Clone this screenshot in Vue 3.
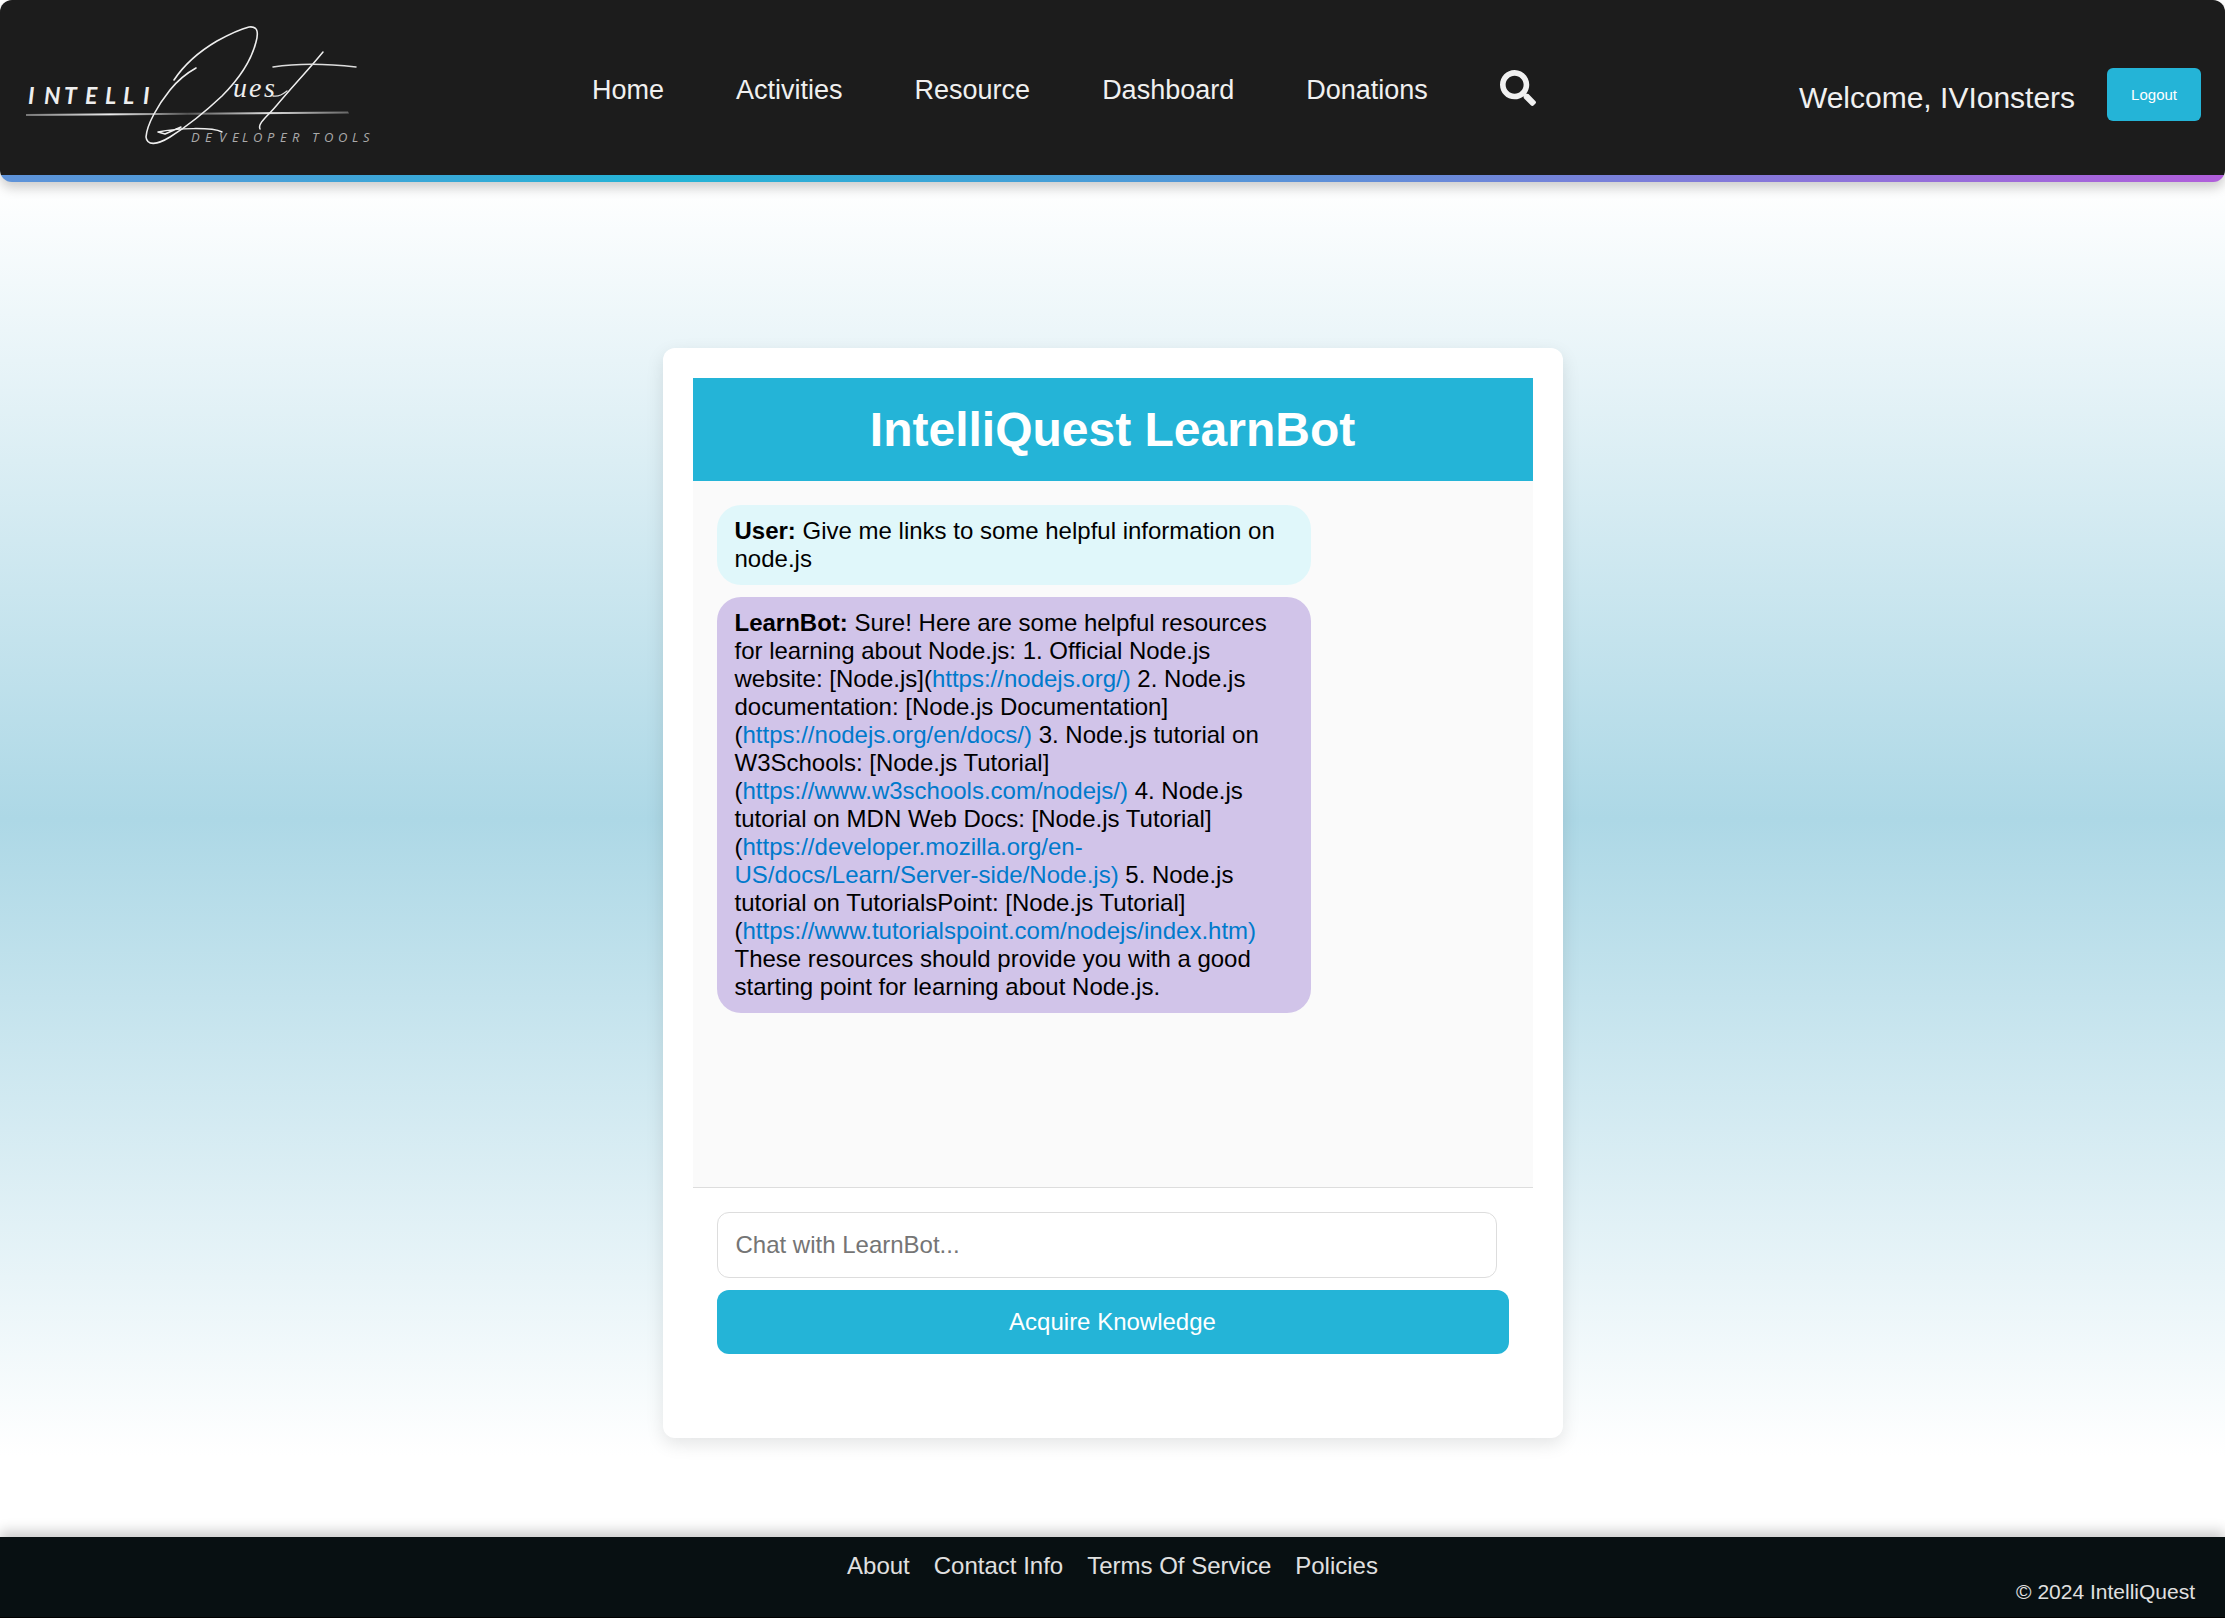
<script setup>
import { ref } from 'vue'

const navLinks = ['Home', 'Activities', 'Resource', 'Dashboard', 'Donations']
const footerLinks = ['About', 'Contact Info', 'Terms Of Service', 'Policies']

const draft = ref('')

const messages = [
  {
    from: 'user',
    author: 'User:',
    text: 'Give me links to some helpful information on node.js',
  },
  {
    from: 'bot',
    author: 'LearnBot:',
    text:
      'Sure! Here are some helpful resources for learning about Node.js: ' +
      '1. Official Node.js website: [Node.js](https://nodejs.org/) ' +
      '2. Node.js documentation: [Node.js Documentation](https://nodejs.org/en/docs/) ' +
      '3. Node.js tutorial on W3Schools: [Node.js Tutorial](https://www.w3schools.com/nodejs/) ' +
      '4. Node.js tutorial on MDN Web Docs: [Node.js Tutorial](https://developer.mozilla.org/en-US/docs/Learn/Server-side/Node.js) ' +
      '5. Node.js tutorial on TutorialsPoint: [Node.js Tutorial](https://www.tutorialspoint.com/nodejs/index.htm) ' +
      'These resources should provide you with a good starting point for learning about Node.js.',
  },
]

// Splits a message into plain pieces and URL pieces.
function pieces(text) {
  return text.split(/(https?:\/\/\S+)/)
}
</script>

<template>
  <div class="page">
    <header class="topbar">
      <a class="brand" href="#" aria-label="IntelliQuest Developer Tools">
        <svg width="352" height="131" viewBox="24 22 352 131" fill="none" stroke-linecap="round" stroke-linejoin="round">
          <defs>
            <linearGradient id="rule" x1="26" x2="349" y1="0" y2="0" gradientUnits="userSpaceOnUse">
              <stop offset="0" stop-color="#777" />
              <stop offset="0.26" stop-color="#eee" />
              <stop offset="0.5" stop-color="#555" />
              <stop offset="0.75" stop-color="#ddd" />
              <stop offset="1" stop-color="#666" />
            </linearGradient>
          </defs>
          <text class="word" y="104" x="28 44 64 85 105 123 143">INTELLI</text>
          <text class="script" y="97" x="233 249 264">ues</text>
          <text class="tagline" y="142" x="191 205 219 232 242 253 267 280 292 306 312 324 338 352 363">DEVELOPER TOOLS</text>
          <path d="M26 114 L348 111.500 L349 113.500 L26 116 Z" fill="url(#rule)" />
          <path
            d="M174 80 C184 65 200 51 217 41 C228 35 241 29 249 27 C257 26 259 31 256 42 C251 62 238 80 222 96 C204 113 186 127 170 137 C157 145 147 146 146 137 C147 124 158 105 170 90 C178 80 187 73 196 68"
            stroke="#eee"
            stroke-width="1.6"
          />
          <path d="M222 132 C212 127 177 128 158 132 L165 134 L181 127" stroke="#eee" stroke-width="1.5" />
          <path d="M323 52 C310 68 293 86 277 105 C270 114 257 123 260 129" stroke="#eee" stroke-width="1.5" />
          <path d="M273 96 C279 97 283 94 287 91" stroke="#ddd" stroke-width="1.3" />
          <path d="M273 67 C299 63 330 64 356 67" stroke="#ddd" stroke-width="1.5" />
        </svg>
      </a>

      <nav class="menu" aria-label="Main">
        <a v-for="link in navLinks" :key="link" href="#">{{ link }}</a>
        <a class="search" href="#" aria-label="Search">
          <svg width="36" height="36" viewBox="0 0 512 512" fill="currentColor">
            <path
              d="M505 442.7L405.3 343c-4.5-4.5-10.6-7-17-7H372c27.6-35.3 44-79.7 44-128C416 93.1 322.9 0 208 0S0 93.1 0 208s93.1 208 208 208c48.3 0 92.7-16.4 128-44v16.3c0 6.4 2.5 12.5 7 17l99.7 99.7c9.4 9.4 24.6 9.4 33.9 0l28.3-28.3c9.4-9.4 9.4-24.6.1-34zM208 336c-70.7 0-128-57.2-128-128 0-70.7 57.2-128 128-128 70.7 0 128 57.2 128 128 0 70.7-57.2 128-128 128z"
            />
          </svg>
        </a>
      </nav>

      <div class="account">
        <span class="welcome">Welcome, IVIonsters</span>
        <button class="logout" type="button">Logout</button>
      </div>
    </header>

    <main class="stage">
      <section class="card">
        <h1 class="title">IntelliQuest LearnBot</h1>

        <div class="log">
          <p v-for="(message, m) in messages" :key="m" class="bubble" :class="message.from">
            <strong>{{ message.author }}</strong>{{ ' ' }}<template
              v-for="(piece, i) in pieces(message.text)"
              :key="i"
              ><a v-if="i % 2" :href="piece">{{ piece }}</a
              ><template v-else>{{ piece }}</template></template
            >
          </p>
        </div>

        <form class="composer" @submit.prevent>
          <input v-model="draft" type="text" aria-label="Message" placeholder="Chat with LearnBot..." />
          <button type="submit">Acquire Knowledge</button>
        </form>
      </section>
    </main>

    <footer class="bottom">
      <nav class="legal" aria-label="Footer">
        <a v-for="link in footerLinks" :key="link" href="#">{{ link }}</a>
      </nav>
      <p class="copyright">© 2024 IntelliQuest</p>
    </footer>
  </div>
</template>

<style>
body {
  margin: 0;
  background: #fff;
}
</style>

<style scoped>
.page {
  display: flex;
  flex-direction: column;
  min-height: 100vh;
  font-family: 'Liberation Sans', Arial, sans-serif;
  font-size: 24px;
  line-height: 28px;
  color: #000;
}

a {
  text-decoration: none;
}

.topbar {
  position: relative;
  display: grid;
  grid-template-columns: minmax(352px, 568px) auto 1fr;
  align-items: center;
  box-sizing: border-box;
  min-height: 182px;
  padding: 0 24px 7px;
  border-radius: 12px;
  background:
    linear-gradient(90deg, #5f92d9, #23b4d6 30%, #b05edb) left bottom / 100% 7px no-repeat,
    #1c1c1c;
  box-shadow: 0 6px 12px rgba(0, 0, 0, 0.2);
  color: #f0f0f0;
}

.brand svg {
  display: block;
}

.word,
.script,
.tagline {
  fill: #eee;
  font-style: italic;
}

.word {
  font-family: Lato, sans-serif;
  font-size: 23px;
  font-weight: 700;
}

.script {
  font-family: 'Liberation Serif', serif;
  font-size: 28px;
}

.tagline {
  fill: #aaa;
  font-family: 'Open Sans', sans-serif;
  font-size: 13px;
}

.menu {
  display: flex;
  align-items: flex-end;
  gap: 72px;
  font-size: 27px;
  line-height: 31px;
}

.menu a {
  color: #f0f0f0;
}

.search svg {
  display: block;
}

.account {
  display: flex;
  align-items: center;
  justify-content: flex-end;
  gap: 32px;
  padding-top: 14px;
}

.welcome {
  padding-top: 6px;
  font-size: 30px;
  line-height: 34px;
}

.logout {
  height: 53px;
  padding: 0 24px;
  border: 0;
  border-radius: 6px;
  background: #24b4d7;
  color: #fff;
  font-family: inherit;
  font-size: 15px;
}

.stage {
  flex: 1;
  padding: 166px 24px 90px;
  background: linear-gradient(#fff, #add8e6 47%, #fff 94%);
}

.card {
  box-sizing: border-box;
  max-width: 900px;
  margin: 0 auto;
  padding: 30px 30px 60px;
  border-radius: 12px;
  background: #fff;
  box-shadow: 0 6px 18px rgba(0, 0, 0, 0.1);
}

.title {
  margin: 0;
  padding: 24px;
  background: #24b4d7;
  color: #fff;
  font-size: 48px;
  line-height: 55px;
  text-align: center;
}

.log {
  display: flex;
  flex-direction: column;
  align-items: flex-start;
  gap: 12px;
  box-sizing: border-box;
  min-height: 707px;
  padding: 24px;
  border-bottom: 1px solid #ddd;
  background: #fafafa;
}

.bubble {
  box-sizing: border-box;
  width: 75%;
  margin: 0;
  padding: 12px 18px;
  border-radius: 24px;
}

.bubble.user {
  background: #e0f7fa;
}

.bubble.bot {
  background: #d1c4e9;
}

.bubble a {
  color: #007acc;
}

.composer {
  display: flex;
  flex-direction: column;
  gap: 12px;
  padding: 24px;
}

.composer input {
  box-sizing: border-box;
  height: 66px;
  margin-right: 12px;
  padding: 0 18px;
  border: 1px solid #ddd;
  border-radius: 12px;
  background: #fff;
  color: #000;
  font-family: inherit;
  font-size: 24px;
}

.composer input::placeholder {
  color: #757575;
}

.composer button {
  height: 64px;
  border: 0;
  border-radius: 12px;
  background: #24b4d7;
  color: #fff;
  font-family: inherit;
  font-size: 24px;
}

.bottom {
  position: relative;
  padding: 15px 30px 13px;
  border-bottom: 1px solid #000;
  background: #081012;
  box-shadow: 0 -6px 12px rgba(0, 0, 0, 0.2);
  color: #e0e0e0;
}

.legal {
  display: flex;
  justify-content: center;
  gap: 24px;
}

.legal a {
  color: #e0e0e0;
}

.copyright {
  margin: 0;
  font-size: 21px;
  line-height: 24px;
  text-align: right;
}
</style>
